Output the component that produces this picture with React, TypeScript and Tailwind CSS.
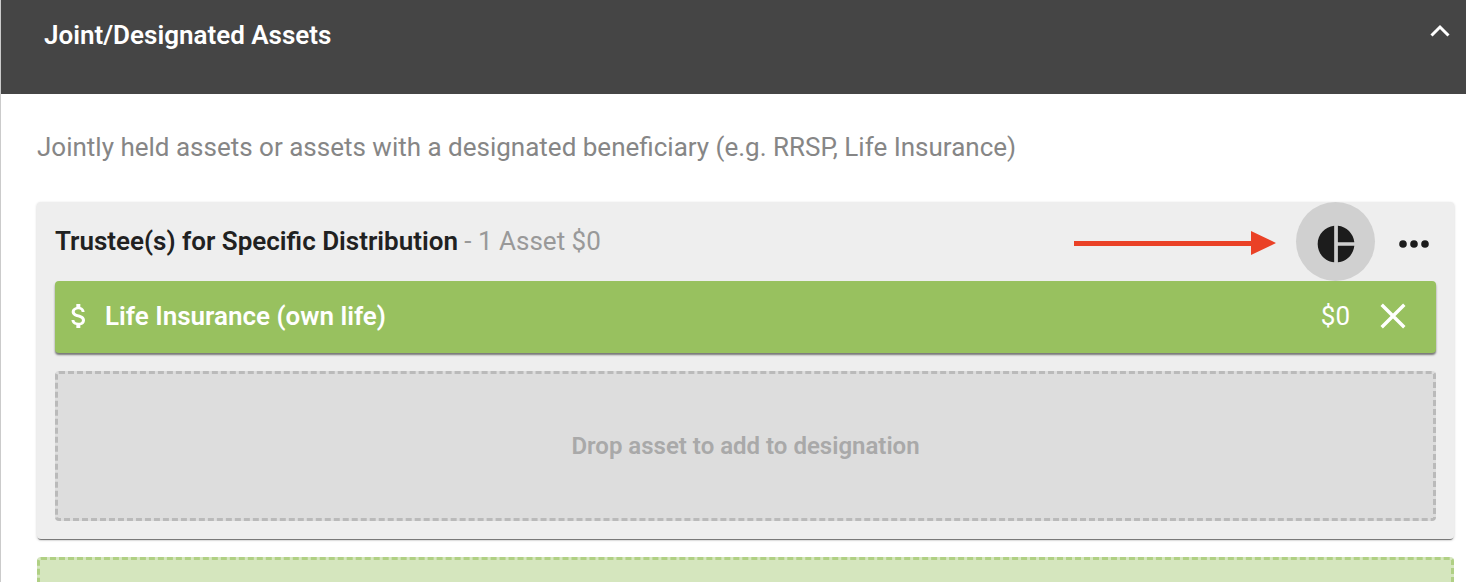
import React, { useState } from "react";
import { MdAttachMoney, MdPieChart } from "react-icons/md";

interface Asset {
    id: number;
    name: string;
    value: number;
}

const initialAssets: Asset[] = [{ id: 1, name: "Life Insurance (own life)", value: 0 }];

const ChevronIcon: React.FC<{ className?: string }> = ({ className }) => (
    <svg className={className} width="20" height="14" viewBox="0 0 20 14" fill="none" stroke="currentColor" strokeWidth="3">
        <path d="M1.5 11.5 10 3l8.5 8.5" />
    </svg>
);

const CloseIcon: React.FC = () => (
    <svg width="26" height="26" viewBox="0 0 26 26" fill="none" stroke="currentColor" strokeWidth="3.4">
        <path d="M1.7 1.7 24.3 24.3M24.3 1.7 1.7 24.3" />
    </svg>
);

const MoreIcon: React.FC = () => (
    <svg width="30" height="8" viewBox="0 0 30 8" fill="currentColor">
        <circle cx="4" cy="4" r="3.8" />
        <circle cx="15" cy="4" r="3.8" />
        <circle cx="26" cy="4" r="3.8" />
    </svg>
);

const Arrow: React.FC = () => (
    <svg width="202" height="26" viewBox="0 0 202 26" fill="#ea4126" aria-hidden="true">
        <path d="M0 12h177V2l25 12-25 12v-9H0z" />
    </svg>
);

const AssetRow: React.FC<{ asset: Asset; onRemove: (id: number) => void }> = ({ asset, onRemove }) => (
    <li className="flex h-[72px] items-center rounded bg-[#98c15f] pr-[30px] pb-0.5 pl-2 text-white shadow-[0_2px_2px_rgba(0,0,0,0.5)]">
        <MdAttachMoney size={32} />
        <span className="ml-[10px] flex-1 text-[26px] leading-8 font-semibold">{asset.name}</span>
        <span className="text-[26px] leading-8">${asset.value}</span>
        <button type="button" aria-label="Remove asset" className="ml-[30px]" onClick={() => onRemove(asset.id)}>
            <CloseIcon />
        </button>
    </li>
);

const App: React.FC = () => {
    const [isOpen, setIsOpen] = useState(true);
    const [assets, setAssets] = useState<Asset[]>(initialAssets);

    const total = assets.reduce((sum, asset) => sum + asset.value, 0);

    const handleRemove = (id: number) => {
        setAssets(assets.filter((asset) => asset.id !== id));
    };

    return (
        <main className="h-screen overflow-hidden border-l border-[#cbcbcb] bg-white font-['Roboto',sans-serif]">
            <header className="flex h-[94px] items-start justify-between bg-[#454545] pt-[19px] pr-4 pl-[43px] text-white">
                <h1 className="text-[26px] leading-8 font-semibold">Joint/Designated Assets</h1>
                <button type="button" aria-label="Toggle section" className="pt-[5px]" onClick={() => setIsOpen(!isOpen)}>
                    <ChevronIcon className={isOpen ? "" : "rotate-180"} />
                </button>
            </header>
            {isOpen && (
                <div className="pr-3 pl-9">
                    <p className="pt-[37px] text-[26px] leading-8 text-[#868686]">
                        Jointly held assets or assets with a designated beneficiary (e.g. RRSP, Life Insurance)
                    </p>
                    <section className="mt-[39px] rounded-sm bg-[#eee] px-[18px] pb-[18px] shadow-[0_1px_3px_rgba(0,0,0,0.2),0_2px_1px_-1px_rgba(0,0,0,0.5)]">
                        <div className="flex h-[79px] items-center">
                            <h2 className="flex-1 pb-0.5 text-[26px] leading-8 font-semibold text-[#212121]">
                                Trustee(s) for Specific Distribution
                                <span className="font-normal text-[#999]"> - 1 Asset ${total}</span>
                            </h2>
                            <Arrow />
                            <button
                                type="button"
                                aria-label="Split designation"
                                className="ml-5 flex size-[79px] items-center justify-center rounded-full bg-[#d0d0d0] pt-1 text-[#1c1c1c]"
                            >
                                <MdPieChart size={44} />
                            </button>
                            <button type="button" aria-label="More options" className="mr-[7px] ml-6 pt-1 text-[#1c1c1c]">
                                <MoreIcon />
                            </button>
                        </div>
                        <ul>
                            {assets.map((asset) => (
                                <AssetRow key={asset.id} asset={asset} onRemove={handleRemove} />
                            ))}
                        </ul>
                        <div className="mt-[18px] flex h-[150px] items-center justify-center rounded border-3 border-dashed border-[#bababa] bg-[#ddd] text-2xl font-semibold text-[#a9a9a9]">
                            Drop asset to add to designation
                        </div>
                    </section>
                    <div className="mt-[18px] h-[150px] rounded border-3 border-dashed border-[#b0d084] bg-[#d5e6be]" />
                </div>
            )}
        </main>
    );
};

export default App;
